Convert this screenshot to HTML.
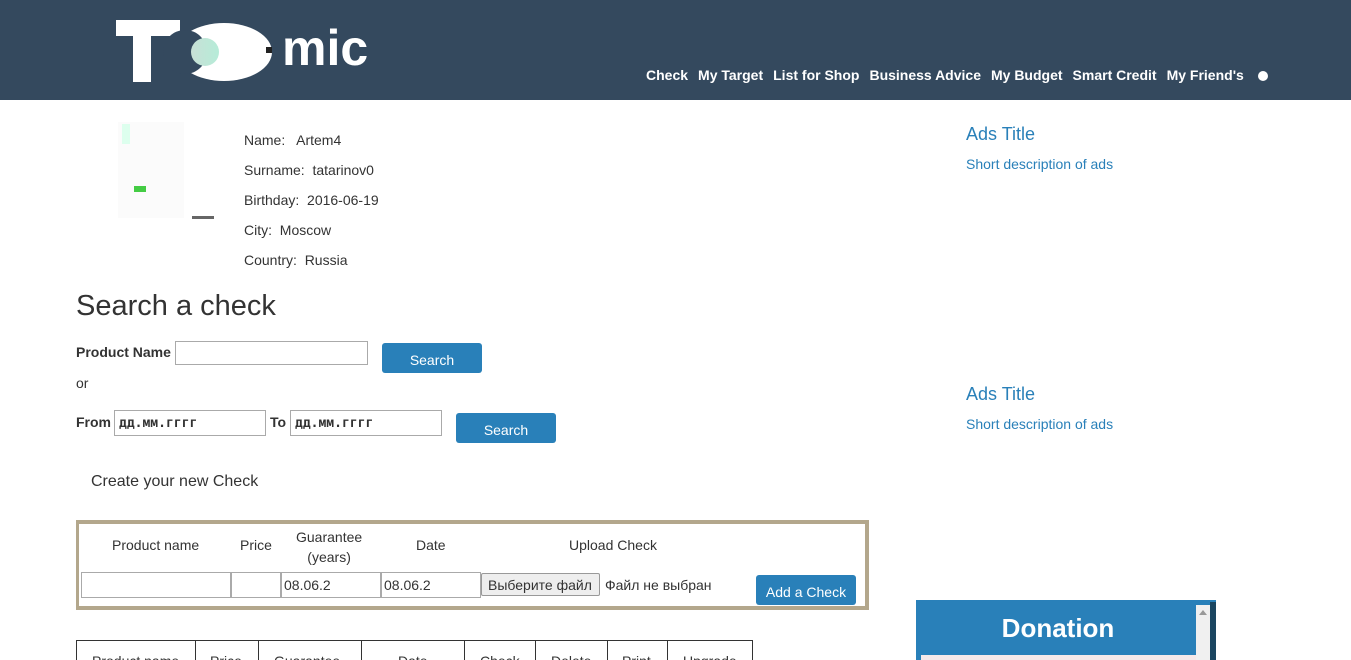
<!DOCTYPE html>
<html><head><meta charset="utf-8"><style>
*{box-sizing:border-box;margin:0;padding:0}
html,body{width:1351px;height:660px;overflow:hidden}
body{background:#fff;font-family:"Liberation Sans",Arial,sans-serif;font-size:14px;color:#333;position:relative}
.a{position:absolute}
.hdr{left:0;top:0;width:1351px;height:100px;background:#34495e}
.nav{top:67px;color:#fff;font-weight:bold;font-size:14px;white-space:nowrap}
.nav span{margin-right:10px}
.btn{background:#2980b9;color:#fff;border-radius:3px;text-align:center;font-size:14px}
.in{border:1px solid #aaa;background:#fff;height:26px}
.lbl{font-size:14px}
.ads{color:#2980b9}
</style></head><body>
<div class="a hdr"></div>
<div class="a" style="left:116px;top:20px;width:64px;height:16px;background:#fff"></div>
<div class="a" style="left:133px;top:20px;width:18px;height:62px;background:#fff"></div>
<div class="a" style="left:176px;top:23px;width:96px;height:58px;background:#fff;border-radius:50%"></div>
<div class="a" style="left:163px;top:30px;width:44px;height:44px;background:#34495e;border-radius:50%"></div>
<div class="a" style="left:191px;top:38px;width:28px;height:28px;border-radius:50%;background:linear-gradient(90deg,#c8e0d6,#b6ecd8)"></div>
<div class="a" style="left:266px;top:47px;width:6px;height:6px;background:#222"></div>
<div class="a" style="left:282px;top:20px;color:#fff;font-weight:bold;font-size:50px;line-height:56px">mic</div>
<div class="a nav" style="left:646px"><span>Check</span><span>My Target</span><span>List for Shop</span><span>Business Advice</span><span>My Budget</span><span>Smart Credit</span><span>My Friend's</span></div>
<div class="a" style="left:1258px;top:71px;width:10px;height:10px;border-radius:50%;background:#fff"></div>

<div class="a" style="left:118px;top:122px;width:66px;height:96px;background:#fbfbfb"></div>
<div class="a" style="left:122px;top:124px;width:8px;height:20px;background:#dfe"></div>
<div class="a" style="left:134px;top:186px;width:12px;height:6px;background:#4c4"></div>
<div class="a" style="left:192px;top:216px;width:22px;height:3px;background:#666"></div>
<div class="a lbl" style="left:244px;top:125px;line-height:30px">Name:&nbsp;&nbsp; Artem4<br>Surname:&nbsp; tatarinov0<br>Birthday:&nbsp; 2016-06-19<br>City:&nbsp; Moscow<br>Country:&nbsp; Russia</div>

<div class="a" style="left:76px;top:290px;font-size:29px;color:#333">Search a check</div>
<div class="a" style="left:76px;top:344px;font-weight:bold">Product Name</div>
<div class="a in" style="left:175px;top:341px;width:193px;height:24px"></div>
<div class="a btn" style="left:382px;top:343px;width:100px;height:30px;line-height:34px">Search</div>
<div class="a" style="left:76px;top:375px">or</div>
<div class="a" style="left:76px;top:414px;font-weight:bold">From</div>
<div class="a in" style="left:114px;top:410px;width:152px;font-family:'DejaVu Sans Mono',monospace;font-weight:bold;font-size:13px;padding:5px 4px">дд.мм.гггг</div>
<div class="a" style="left:270px;top:414px;font-weight:bold">To</div>
<div class="a in" style="left:290px;top:410px;width:152px;font-family:'DejaVu Sans Mono',monospace;font-weight:bold;font-size:13px;padding:5px 4px">дд.мм.гггг</div>
<div class="a btn" style="left:456px;top:413px;width:100px;height:30px;line-height:34px">Search</div>
<div class="a" style="left:91px;top:473px;font-size:16px">Create your new Check</div>

<div class="a" style="left:76px;top:520px;width:793px;height:90px;border:4px solid #b3a78c;border-left-width:3px;background:#fff"></div>
<div class="a" style="left:112px;top:537px">Product name</div>
<div class="a" style="left:240px;top:537px">Price</div>
<div class="a" style="left:296px;top:527px;text-align:center;line-height:20px">Guarantee<br>(years)</div>
<div class="a" style="left:416px;top:537px">Date</div>
<div class="a" style="left:569px;top:537px">Upload Check</div>
<div class="a in" style="left:81px;top:572px;width:150px"></div>
<div class="a in" style="left:231px;top:572px;width:50px"></div>
<div class="a in" style="left:281px;top:572px;width:100px;padding:4px 2px">08.06.2</div>
<div class="a in" style="left:381px;top:572px;width:100px;padding:4px 2px">08.06.2</div>
<div class="a" style="left:481px;top:573px;width:119px;height:23px;border:1px solid #999;background:#eee;border-radius:2px;font-size:14px;padding:3px 6px">Выберите файл</div>
<div class="a" style="left:605px;top:577px">Файл не выбран</div>
<div class="a btn" style="left:756px;top:575px;width:100px;height:30px;line-height:34px">Add a Check</div>

<div class="a" style="left:76px;top:640px;width:677px;height:20px;border:1px solid #333;border-bottom:0"></div>
<div class="a" style="top:641px;left:195px;width:1px;height:20px;background:#333"></div>
<div class="a" style="top:641px;left:258px;width:1px;height:20px;background:#333"></div>
<div class="a" style="top:641px;left:361px;width:1px;height:20px;background:#333"></div>
<div class="a" style="top:641px;left:464px;width:1px;height:20px;background:#333"></div>
<div class="a" style="top:641px;left:535px;width:1px;height:20px;background:#333"></div>
<div class="a" style="top:641px;left:607px;width:1px;height:20px;background:#333"></div>
<div class="a" style="top:641px;left:667px;width:1px;height:20px;background:#333"></div>
<div class="a" style="top:653px;left:92px">Product name</div>
<div class="a" style="top:653px;left:210px">Price</div>
<div class="a" style="top:653px;left:274px">Guarantee</div>
<div class="a" style="top:653px;left:398px">Date</div>
<div class="a" style="top:653px;left:480px">Check</div>
<div class="a" style="top:653px;left:551px">Delete</div>
<div class="a" style="top:653px;left:622px">Print</div>
<div class="a" style="top:653px;left:683px">Upgrade</div>

<div class="a ads" style="left:966px;top:124px;font-size:18px">Ads Title</div>
<div class="a ads" style="left:966px;top:156px">Short description of ads</div>
<div class="a ads" style="left:966px;top:384px;font-size:18px">Ads Title</div>
<div class="a ads" style="left:966px;top:416px">Short description of ads</div>

<div class="a" style="left:916px;top:600px;width:300px;height:60px;background:#2980b9"></div>
<div class="a" style="left:1210px;top:602px;width:6px;height:58px;background:#1a4560"></div>
<div class="a" style="left:1196px;top:605px;width:14px;height:55px;background:#f0f0f0"></div>
<div class="a" style="left:1199px;top:610px;width:0;height:0;border-left:4px solid transparent;border-right:4px solid transparent;border-bottom:5px solid #999"></div>
<div class="a" style="left:921px;top:655px;width:275px;height:5px;background:#f5e9e9"></div>
<div class="a" style="left:916px;top:613px;width:284px;text-align:center;color:#fff;font-weight:bold;font-size:26px">Donation</div>
</body></html>
